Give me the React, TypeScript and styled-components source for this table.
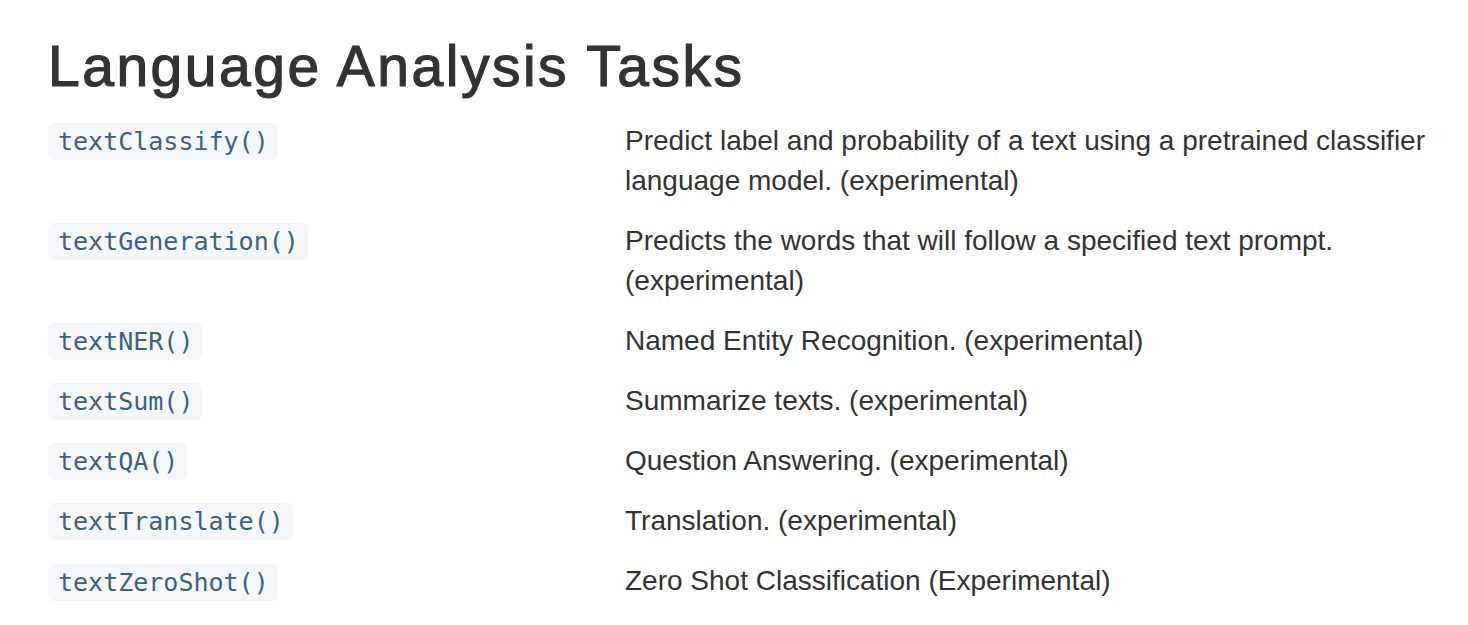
import React from 'react'
import styled, { createGlobalStyle } from 'styled-components'

const GlobalStyle = createGlobalStyle`
  body {
    margin: 0;
    background: #ffffff;
    font-family: "Liberation Sans", Arial, sans-serif;
    color: #333333;
  }
`

const tasks = [
  { fn: 'textClassify()', desc: 'Predict label and probability of a text using a pretrained classifier language model. (experimental)' },
  { fn: 'textGeneration()', desc: 'Predicts the words that will follow a specified text prompt. (experimental)' },
  { fn: 'textNER()', desc: 'Named Entity Recognition. (experimental)' },
  { fn: 'textSum()', desc: 'Summarize texts. (experimental)' },
  { fn: 'textQA()', desc: 'Question Answering. (experimental)' },
  { fn: 'textTranslate()', desc: 'Translation. (experimental)' },
  { fn: 'textZeroShot()', desc: 'Zero Shot Classification (Experimental)' },
]

const Page = styled.main`
  padding: 26px 20px 0 48px;
`

// Helvetica Neue Medium look: regular face, thickened and spaced a bit
const Heading = styled.h2`
  margin: 0 0 5px;
  font-size: 57px;
  font-weight: 400;
  line-height: 80px;
  letter-spacing: 2.5px;
  -webkit-text-stroke: 1.2px #333333;
  color: #333333;
`

const Table = styled.div`
  display: grid;
  grid-template-columns: 577px 823px;
`

const Row = styled.div`
  display: contents;
`

const Cell = styled.div`
  padding: 10px 0;
  font-size: 28px;
  line-height: 40px;
`

const Code = styled.code`
  display: inline-block;
  padding: 4px 9px 4px 10px;
  border-radius: 6px;
  background: #f5f6f8;
  color: #3b6185;
  font-family: "DejaVu Sans Mono", monospace;
  font-size: 25px;
  line-height: 29px;
  vertical-align: middle;
  position: relative;
  top: -1px;
`

export default function App() {
  return (
    <>
      <GlobalStyle />
      <Page>
        <Heading>Language Analysis Tasks</Heading>
        <Table>
          {tasks.map((t) => (
            <Row key={t.fn}>
              <Cell>
                <Code>{t.fn}</Code>
              </Cell>
              <Cell>{t.desc}</Cell>
            </Row>
          ))}
        </Table>
      </Page>
    </>
  )
}
